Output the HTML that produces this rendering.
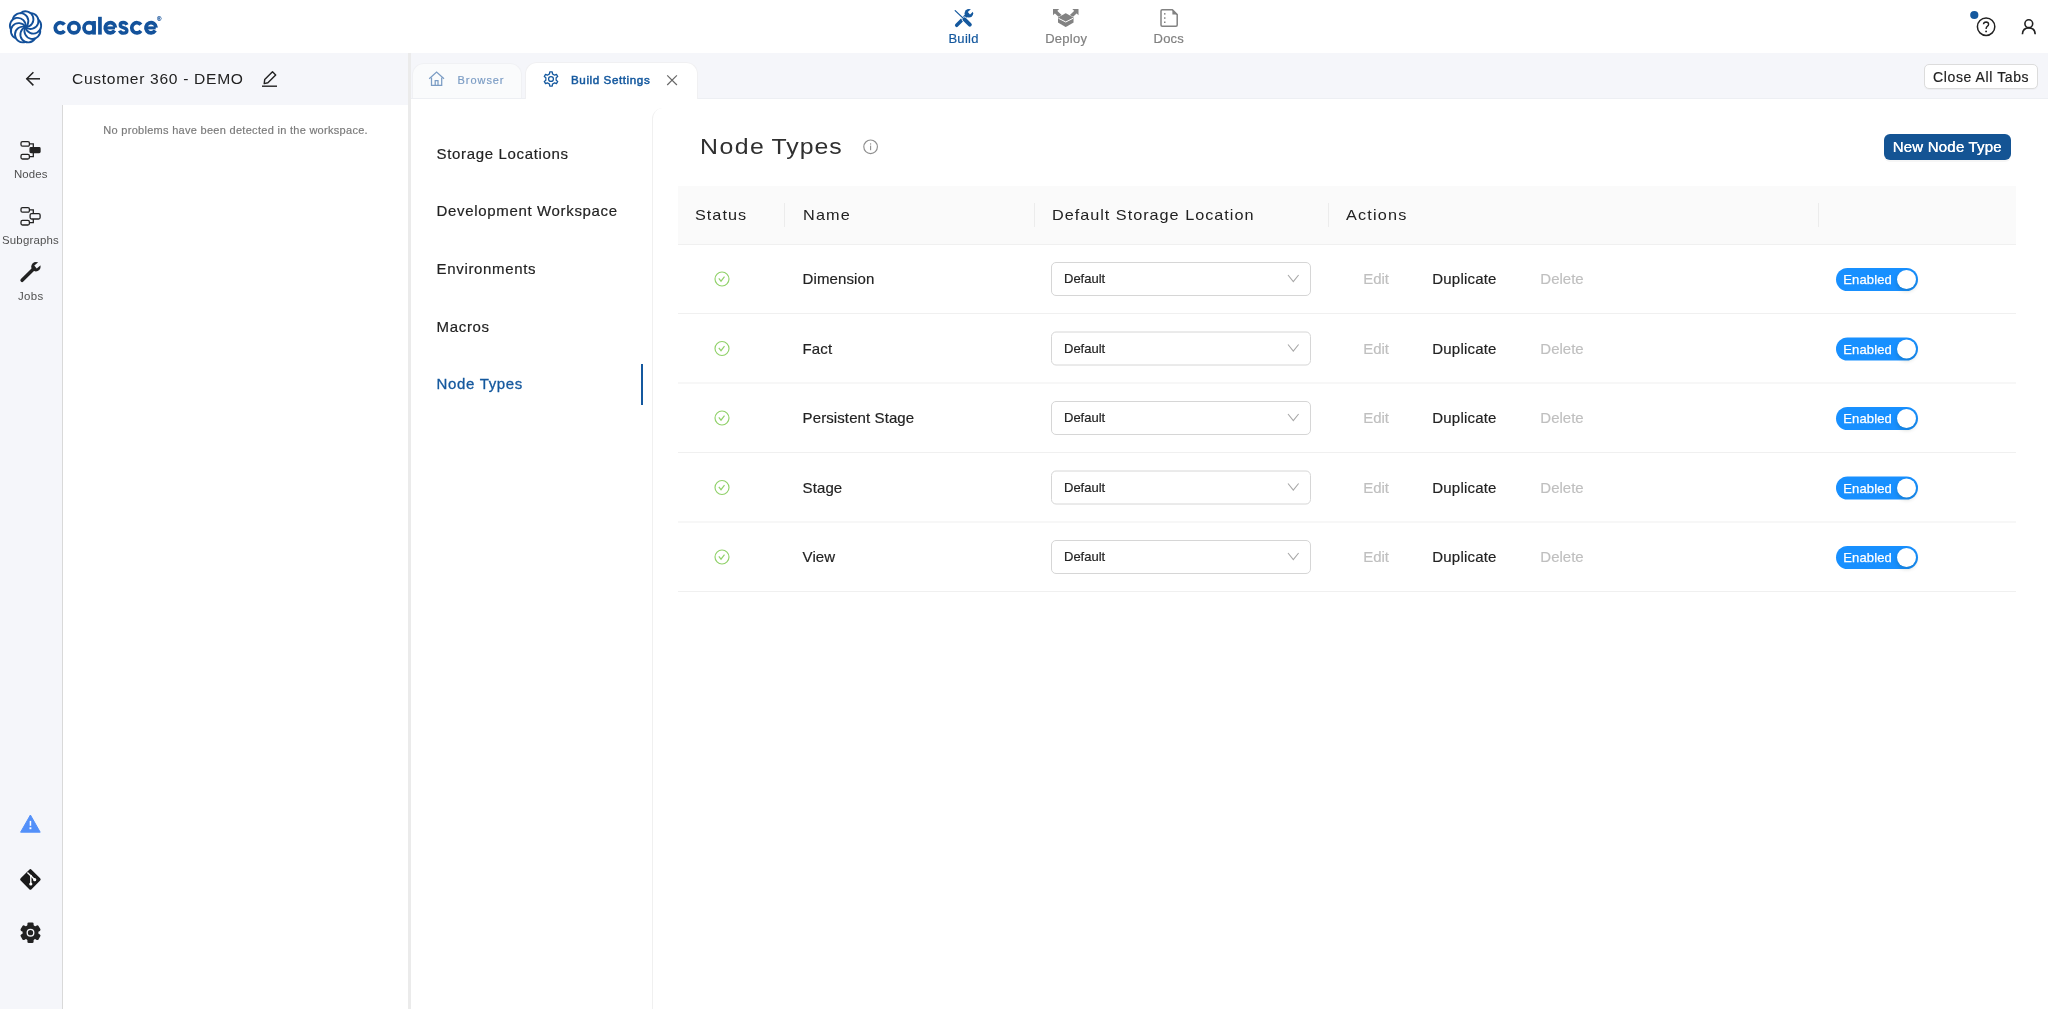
<!DOCTYPE html>
<html>
<head>
<meta charset="utf-8">
<title>Coalesce</title>
<style>
*{box-sizing:border-box;margin:0;padding:0}
html,body{width:2048px;height:1009px;overflow:hidden;background:#fff}
body{font-family:"Liberation Sans",sans-serif;color:#222;position:relative;will-change:transform}
.abs{position:absolute}
.t{position:absolute;white-space:nowrap;line-height:1;-webkit-text-stroke:.18px}
svg{position:absolute;overflow:visible}
#topbar{left:0;top:0;width:2048px;height:53px;background:#fff}
#leftbg{left:0;top:53px;width:408px;height:956px;background:#f5f6fa}
#sideborder{left:62px;top:105px;width:1px;height:904px;background:#d9d9d9}
#leftpanel{left:63px;top:105px;width:345px;height:904px;background:#fff}
#vdiv{left:408px;top:53px;width:3px;height:956px;background:#ebebeb}
#tabstrip{left:411px;top:53px;width:1637px;height:46px;background:#f5f6fa;border-bottom:1px solid #edeff3}
#tab1{left:411.5px;top:62.6px;width:110px;height:35.4px;background:#fafbfc;border-radius:12px 12px 0 0;border:1px solid #f0f1f4;border-bottom:none}
#tab2{left:525.3px;top:62px;width:172.8px;height:37px;background:#fff;border-radius:12px 12px 0 0;border:1px solid #f0f0f2;border-bottom:none}
#rightpanel{left:652px;top:107.5px;width:1410px;height:920px;border-left:1px solid #f0f0f0;border-radius:11px 0 0 0;background:#fff}
#closeall{left:1924.4px;top:64.2px;width:113.3px;height:24.8px;box-shadow:0 1px 1px rgba(0,0,0,.03);background:#fff;border:1px solid #dcdcdc;border-radius:5px}
#newnode{left:1884px;top:134px;width:127px;height:26px;background:#145494;border-radius:6px;box-shadow:0 2px 0 rgba(0,0,0,.035)}
#thead{left:678px;top:186px;width:1338px;height:58.7px;background:#fafafa;border-bottom:1px solid #f0f0f0}
.cdiv{position:absolute;width:1px;height:24px;top:203px;background:#ececec}
.rline{position:absolute;left:678px;width:1338px;height:1px;background:#f0f0f0}
.sel{position:absolute;left:1051px;width:260px;height:34px;border:1px solid #d6d6d6;border-radius:5px;background:#fff}
.sw{position:absolute;left:1836px;width:82px;height:23px;border-radius:12px;background:#1890ff}
.knob{position:absolute;left:1896.9px;width:19.4px;height:19.4px;border-radius:50%;background:#fff;box-shadow:0 2px 4px rgba(0,35,11,.2)}
#actbar{left:641px;top:364px;width:2px;height:41px;background:#14589e}
</style>
</head>
<body>
<div class="abs" id="topbar"></div>
<div class="abs" id="leftbg"></div>
<div class="abs" id="leftpanel"></div>
<div class="abs" id="sideborder"></div>
<div class="abs" id="vdiv"></div>
<div class="abs" id="tabstrip"></div>
<div class="abs" id="tab1"></div>
<div class="abs" id="tab2"></div>
<div class="abs" id="rightpanel"></div>
<div class="abs" id="closeall"></div>
<div class="abs" id="newnode"></div>
<div class="abs" id="thead"></div>
<div class="abs" id="actbar"></div>
<svg style="left:0;top:0" width="60" height="53"><g transform="translate(25.55,27.1)" fill="none" stroke="#13509a" stroke-width="1.85" stroke-linecap="round"><path transform="rotate(0)" d="M0,0 A7.88,7.88 0 1 0 -5.06,-13.91"/><path transform="rotate(40)" d="M0,0 A7.88,7.88 0 1 0 -5.06,-13.91"/><path transform="rotate(80)" d="M0,0 A7.88,7.88 0 1 0 -5.06,-13.91"/><path transform="rotate(120)" d="M0,0 A7.88,7.88 0 1 0 -5.06,-13.91"/><path transform="rotate(160)" d="M0,0 A7.88,7.88 0 1 0 -5.06,-13.91"/><path transform="rotate(200)" d="M0,0 A7.88,7.88 0 1 0 -5.06,-13.91"/><path transform="rotate(240)" d="M0,0 A7.88,7.88 0 1 0 -5.06,-13.91"/><path transform="rotate(280)" d="M0,0 A7.88,7.88 0 1 0 -5.06,-13.91"/><path transform="rotate(320)" d="M0,0 A7.88,7.88 0 1 0 -5.06,-13.91"/></g></svg>
<svg style="left:0;top:0" width="170" height="53"><g fill="none" stroke="#13529b" stroke-width="3.7"><path d="M64.42,30.87 A5.1,5.1 0 1 1 64.42,24.73"/><circle cx="73.95" cy="27.8" r="5.15"/><circle cx="89.1" cy="27.8" r="5.1"/><path d="M94.05,21 V34.6"/><path d="M99.95,16.8 V34.6"/><path d="M114.58,30.58 A5.1,5.1 0 1 1 115.40,27.62"/><path d="M105.6,27.900000000000002 H115" stroke-width="3"/><path d="M126.9,24.9 C126.2,22.9 124.6,22.5 123.3,22.5 C121.4,22.5 120.2,23.5 120.2,24.9 C120.2,26.4 121.4,27.1 123.4,27.7 C125.6,28.3 126.9,29 126.9,30.7 C126.9,32.3 125.4,33.1 123.5,33.1 C121.6,33.1 120.2,32.3 119.6,30.6" stroke-width="3.3"/><path d="M140.92,30.87 A5.1,5.1 0 1 1 140.92,24.73"/><path d="M155.28,30.58 A5.1,5.1 0 1 1 156.10,27.62"/><path d="M146.3,27.900000000000002 H155.7" stroke-width="3"/></g></svg>
<div class="t " style="left:157.00px;top:16.00px;font-size:6px;color:#13509a;">&#174;</div>
<div class="t " style="left:948.40px;top:32.00px;font-size:13px;color:#14589e;letter-spacing:0.3px;-webkit-text-stroke:.2px;">Build</div>
<div class="t " style="left:1045.20px;top:32.00px;font-size:13px;color:#808080;letter-spacing:0.25px;">Deploy</div>
<div class="t " style="left:1153.60px;top:32.00px;font-size:13px;color:#808080;letter-spacing:0.2px;">Docs</div>
<svg style="left:954px;top:8px" width="20" height="20" viewBox="0 0 20 20">
<defs><mask id="wm"><rect x="-2" y="-2" width="24" height="24" fill="#fff"/><rect x="14.9" y="3.55" width="9" height="3.3" transform="rotate(-42 14.9 5.2)" fill="#000"/></mask></defs>
<path d="M2.7,17.3 L12.4,7.6" stroke="#14589e" stroke-width="3.5" stroke-linecap="round" fill="none"/>
<circle cx="14.9" cy="5.2" r="4.3" fill="#14589e" mask="url(#wm)"/>
<g fill="none" stroke="#fff" stroke-linecap="round"><path d="M1.2,2.6 L8.6,10" stroke-width="2.6"/><path d="M10.5,11.4 L15.8,16.6" stroke-width="5.4"/></g>
<g fill="none" stroke="#14589e" stroke-linecap="round"><path d="M1.2,2.6 L9.6,10.6" stroke-width="1.3"/><path d="M10.5,11.4 L15.8,16.6" stroke-width="4"/></g>
</svg>
<svg style="left:1052px;top:8px" width="28" height="20" viewBox="0 0 28 20">
<g fill="none" stroke="#828282" stroke-width="3.5"><path d="M3.4,3.4 L10.8,10.6"/><path d="M24.1,3.4 L16.7,10.6"/></g>
<g fill="#828282" stroke="none"><polygon points="1,1.1 7.2,1.1 1,7.2"/><polygon points="26.5,1.1 20.3,1.1 26.5,7.2"/></g>
<polygon points="6,9.5 13.75,5.3 21.5,9.5 21.5,14.5 13.75,18.9 6,14.5" fill="#828282" stroke="#fff" stroke-width="0.9"/>
<polygon points="6,9.5 13.75,5.3 21.5,9.5 21.5,14.5 13.75,18.9 6,14.5" fill="#828282"/>
<path d="M6.5,10.3 L13.75,14 L21,10.3" fill="none" stroke="#fff" stroke-width="1"/>
</svg>
<svg style="left:1160px;top:9px" width="18" height="18" viewBox="0 0 18 18">
<path d="M2.2,0.8 H12.4 L17.2,5.6 V16 Q17.2,17.2 16,17.2 H2.2 Q1,17.2 1,16 V2 Q1,0.8 2.2,0.8 Z" fill="none" stroke="#828282" stroke-width="1.5" stroke-linejoin="round"/>
<polygon points="12.4,0.8 12.4,5.6 17.2,5.6" fill="#828282"/>
<g fill="#828282"><rect x="4" y="4.1" width="1.5" height="1.5"/><rect x="4" y="8.3" width="1.5" height="1.5"/><rect x="4" y="12.5" width="1.5" height="1.5"/></g>
</svg>
<svg style="left:1960px;top:0" width="88" height="53" viewBox="0 0 88 53">
<circle cx="14.3" cy="15.0" r="4.1" fill="#14589e"/>
<circle cx="26.1" cy="26.7" r="8.7" fill="none" stroke="#222" stroke-width="1.5"/>
<path d="M23.5,24.3 Q23.6,22 26.1,22 Q28.6,22.1 28.6,24.2 Q28.6,25.5 27.3,26.4 Q26.1,27.2 26.1,28.9" fill="none" stroke="#222" stroke-width="1.4"/>
<circle cx="26.1" cy="31.4" r="0.95" fill="#222"/>
<circle cx="68.8" cy="23.7" r="3.9" fill="none" stroke="#222" stroke-width="1.6"/>
<path d="M62.4,34.2 Q62.8,27.9 68.8,27.9 Q74.8,27.9 75.2,34.2" fill="none" stroke="#222" stroke-width="1.6"/>
</svg>
<svg style="left:20px;top:66px" width="270" height="28" viewBox="0 0 270 28">
<g fill="none" stroke="#222" stroke-width="1.5"><path d="M6.6,12.8 H20"/><path d="M13.4,6.2 L6.8,12.8 L13.4,19.4"/></g>
<g fill="none" stroke="#222" stroke-width="1.4"><path d="M242,20.2 H257"/><path d="M244.2,17.6 L244.7,13.6 L252.5,5.8 L255.7,8.9 L247.9,16.7 Z" stroke-linejoin="round"/></g>
</svg>
<div class="t " style="left:72.00px;top:71.90px;font-size:14.2px;color:#222;letter-spacing:0.62px;transform:scaleX(1.1);transform-origin:0 0;-webkit-text-stroke:0;">Customer 360 - DEMO</div>
<div class="t " style="left:103.30px;top:124.50px;font-size:11px;color:#7a7a7a;letter-spacing:0.29px;">No problems have been detected in the workspace.</div>
<svg style="left:0;top:139.7px" width="62" height="20" viewBox="0 0 62 20">
<g fill="none" stroke="#222" stroke-width="1.3">
<rect x="21" y="1.6" width="8.4" height="4.6" rx="1.5"/>
<rect x="21" y="14.4" width="8.4" height="4.6" rx="1.5"/>
<path d="M29.4,3.9 H33.3 V7.6"/><path d="M29.4,16.7 H33.3 V13"/>
<rect x="30.1" y="7.7" width="9.9" height="4.9" rx="0.8" fill="#222"/>
</g></svg>
<svg style="left:0;top:206.0px" width="62" height="20" viewBox="0 0 62 20">
<g fill="none" stroke="#222" stroke-width="1.3">
<rect x="21" y="1.6" width="8.4" height="4.6" rx="1.5"/>
<rect x="21" y="14.4" width="8.4" height="4.6" rx="1.5"/>
<path d="M29.4,3.9 H33.3 V7.6"/><path d="M29.4,16.7 H33.3 V13"/>
<rect x="30.1" y="7.6" width="10" height="5.4" rx="1.5" fill="none"/>
</g></svg>
<div class="t " style="left:13.90px;top:168.70px;font-size:10.6px;color:#505050;letter-spacing:0.1px;transform:scaleX(1.08);transform-origin:0 0;-webkit-text-stroke:0;">Nodes</div>
<div class="t " style="left:1.80px;top:234.70px;font-size:10.6px;color:#505050;letter-spacing:0.16px;transform:scaleX(1.08);transform-origin:0 0;-webkit-text-stroke:0;">Subgraphs</div>
<div class="t " style="left:18.30px;top:290.70px;font-size:10.6px;color:#505050;letter-spacing:0.3px;transform:scaleX(1.08);transform-origin:0 0;-webkit-text-stroke:0;">Jobs</div>
<svg style="left:19px;top:261px" width="24" height="22" viewBox="0 0 24 22">
<defs><mask id="wj"><rect x="-2" y="-2" width="28" height="26" fill="#fff"/><rect x="16.4" y="3.8" width="9" height="3.8" transform="rotate(-40 16.9 5.7)" fill="#000"/></mask></defs>
<path d="M3.1,19.3 L14,8.6" stroke="#222" stroke-width="3.5" stroke-linecap="round" fill="none"/>
<circle cx="16.9" cy="5.7" r="4.7" fill="#222" mask="url(#wj)"/>
</svg>
<svg style="left:19px;top:813px" width="24" height="22" viewBox="0 0 24 22">
<path d="M11.4,2 L21.2,19.2 H1.6 Z" fill="#5390f9" stroke="#5390f9" stroke-width="1" stroke-linejoin="round"/>
<rect x="10.7" y="7.9" width="1.5" height="4.9" fill="#fff"/><rect x="10.5" y="14.3" width="1.9" height="1.9" fill="#fff"/>
</svg>
<svg style="left:19px;top:867px" width="24" height="24" viewBox="0 0 24 24">
<rect x="3.7" y="4.7" width="15.4" height="15.4" rx="1.6" transform="rotate(45 11.4 12.4)" fill="#1a1a1a"/>
<g stroke="#fff" stroke-width="1.35" fill="none"><path d="M8.4,5.4 L11.8,8.8 V17"/><path d="M11.8,8.8 L15.6,12.6"/></g>
<g fill="#fff"><circle cx="11.8" cy="8.8" r="1.0"/><circle cx="11.8" cy="17" r="1.6"/><circle cx="15.7" cy="12.7" r="1.6"/></g>
</svg>
<svg style="left:19px;top:921px" width="24" height="24" viewBox="0 0 24 24">
<g transform="translate(11.5,11.7)" fill="#222"><rect x="-3.1" y="-10.3" width="6.2" height="5" rx="1.3" transform="rotate(0)"/><rect x="-3.1" y="-10.3" width="6.2" height="5" rx="1.3" transform="rotate(60)"/><rect x="-3.1" y="-10.3" width="6.2" height="5" rx="1.3" transform="rotate(120)"/><rect x="-3.1" y="-10.3" width="6.2" height="5" rx="1.3" transform="rotate(180)"/><rect x="-3.1" y="-10.3" width="6.2" height="5" rx="1.3" transform="rotate(240)"/><rect x="-3.1" y="-10.3" width="6.2" height="5" rx="1.3" transform="rotate(300)"/><circle r="7.9"/></g>
<circle cx="11.5" cy="11.7" r="3.3" fill="none" stroke="#f5f6fa" stroke-width="1.3"/>
</svg>
<svg style="left:428px;top:70px" width="18" height="18" viewBox="0 0 18 18">
<g fill="none" stroke="#7b9cc4" stroke-width="1.25" stroke-linejoin="miter"><path d="M1.2,8.8 L8.6,2.1 L16,8.8"/><path d="M3.5,7.4 V15.4 H13.7 V7.4"/><path d="M7.2,15.4 V10.6 H10 V15.4"/></g>
</svg>
<div class="t " style="left:457.60px;top:74.50px;font-size:11px;color:#7b9cc4;letter-spacing:0.93px;">Browser</div>
<svg style="left:542.6px;top:70.5px" width="16" height="16" viewBox="0 0 16 16">
<g transform="rotate(30 8 8)"><path d="M15.04,6.73 L15.04,9.27 L13.09,9.48 L11.83,11.67 L12.62,13.46 L10.42,14.73 L9.26,13.15 L6.74,13.15 L5.58,14.73 L3.38,13.46 L4.17,11.67 L2.91,9.48 L0.96,9.27 L0.96,6.73 L2.91,6.52 L4.17,4.33 L3.38,2.54 L5.58,1.27 L6.74,2.85 L9.26,2.85 L10.42,1.27 L12.62,2.54 L11.83,4.33 L13.09,6.52 Z" fill="none" stroke="#14589e" stroke-width="1.25" stroke-linejoin="round"/></g>
<circle cx="8" cy="8" r="2.45" fill="none" stroke="#14589e" stroke-width="1.25"/>
</svg>
<div class="t " style="left:571.00px;top:74.20px;font-size:11.6px;color:#14589e;letter-spacing:0.6px;-webkit-text-stroke:.5px;">Build Settings</div>
<svg style="left:667px;top:75px" width="11" height="11" viewBox="0 0 11 11"><g stroke="#666" stroke-width="1.15" fill="none"><path d="M0.2,0.3 L9.9,10"/><path d="M9.9,0.3 L0.2,10"/></g></svg>
<div class="t " style="left:1933.10px;top:70.00px;font-size:14px;color:#222;letter-spacing:0.6px;">Close All Tabs</div>
<div class="t " style="left:436.60px;top:146.00px;font-size:15px;color:#222;letter-spacing:0.66px;">Storage Locations</div>
<div class="t " style="left:436.60px;top:203.00px;font-size:15px;color:#222;letter-spacing:0.66px;">Development Workspace</div>
<div class="t " style="left:436.60px;top:261.00px;font-size:15px;color:#222;letter-spacing:0.66px;">Environments</div>
<div class="t " style="left:436.60px;top:319.00px;font-size:15px;color:#222;letter-spacing:0.66px;">Macros</div>
<div class="t " style="left:436.60px;top:376.00px;font-size:15px;color:#14589e;letter-spacing:0.66px;-webkit-text-stroke:.3px;">Node Types</div>
<div class="t " style="left:699.80px;top:136.30px;font-size:22.4px;color:#303030;transform:scaleX(1.11);transform-origin:0 0;-webkit-text-stroke:0;"><span style="letter-spacing:1.3px">Node </span><span style="letter-spacing:0.85px;margin-left:-1.8px">Types</span></div>
<svg style="left:862px;top:138px" width="18" height="18" viewBox="0 0 18 18"><circle cx="8.6" cy="8.8" r="6.8" fill="none" stroke="#8e8e8e" stroke-width="1.15"/><rect x="8.05" y="7.6" width="1.1" height="4.6" fill="#8e8e8e"/><rect x="8.05" y="5.3" width="1.1" height="1.3" fill="#8e8e8e"/></svg>
<div class="t " style="left:1892.80px;top:139.00px;font-size:15px;color:#fff;letter-spacing:0.2px;text-shadow:0 0 .4px #fff;">New Node Type</div>
<div class="cdiv" style="left:784px"></div>
<div class="cdiv" style="left:1033.5px"></div>
<div class="cdiv" style="left:1327.5px"></div>
<div class="cdiv" style="left:1818px"></div>
<div class="t " style="left:695.00px;top:207.75px;font-size:14.5px;color:#222;letter-spacing:0.9px;transform:scaleX(1.12);transform-origin:0 0;-webkit-text-stroke:0;">Status</div>
<div class="t " style="left:803.00px;top:207.75px;font-size:14.5px;color:#222;letter-spacing:1.05px;transform:scaleX(1.12);transform-origin:0 0;-webkit-text-stroke:0;">Name</div>
<div class="t " style="left:1051.60px;top:207.75px;font-size:14.5px;color:#222;letter-spacing:0.88px;transform:scaleX(1.12);transform-origin:0 0;-webkit-text-stroke:0;">Default Storage Location</div>
<div class="t " style="left:1345.80px;top:207.75px;font-size:14.5px;color:#222;letter-spacing:1.05px;transform:scaleX(1.12);transform-origin:0 0;-webkit-text-stroke:0;">Actions</div>
<div class="abs" style="left:0;top:0;width:0;height:0;transform:translateY(0.0px)">
<div class="rline" style="top:313px"></div>
<svg style="left:713.4px;top:269.5px" width="18" height="18" viewBox="0 0 18 18"><circle cx="9" cy="9" r="7" fill="none" stroke="#90d169" stroke-width="1.15"/><path d="M5.8,8.4 L8,11.2 L11.5,6.6" fill="none" stroke="#90d169" stroke-width="1.15"/></svg>
<div class="t " style="left:802.60px;top:271.00px;font-size:15px;color:#222;letter-spacing:0.1px;">Dimension</div>
<div class="sel" style="top:262.1px"></div>
<div class="t " style="left:1064.00px;top:272.00px;font-size:13px;color:#222;">Default</div>
<svg style="left:1287px;top:274.3px" width="13" height="9" viewBox="0 0 13 9"><path d="M1,1 L6.3,7.6 L11.6,1" fill="none" stroke="#a8a8a8" stroke-width="1.1"/></svg>
<div class="t " style="left:1363.20px;top:271.00px;font-size:15px;color:#bfbfbf;">Edit</div>
<div class="t " style="left:1432.30px;top:271.00px;font-size:15px;color:#222;letter-spacing:0.2px;">Duplicate</div>
<div class="t " style="left:1540.30px;top:271.00px;font-size:15px;color:#bfbfbf;">Delete</div>
<div class="sw" style="top:267.7px"></div><div class="knob" style="top:269.5px"></div>
<div class="t " style="left:1843.30px;top:273.00px;font-size:13px;color:#fff;letter-spacing:0.12px;-webkit-text-stroke:.25px #fff;">Enabled</div>
</div>
<div class="abs" style="left:0;top:0;width:0;height:0;transform:translateY(0.5px)">
<div class="rline" style="top:382px"></div>
<svg style="left:713.4px;top:338.5px" width="18" height="18" viewBox="0 0 18 18"><circle cx="9" cy="9" r="7" fill="none" stroke="#90d169" stroke-width="1.15"/><path d="M5.8,8.4 L8,11.2 L11.5,6.6" fill="none" stroke="#90d169" stroke-width="1.15"/></svg>
<div class="t " style="left:802.60px;top:340.00px;font-size:15px;color:#222;letter-spacing:0.1px;">Fact</div>
<div class="sel" style="top:331.1px"></div>
<div class="t " style="left:1064.00px;top:341.00px;font-size:13px;color:#222;">Default</div>
<svg style="left:1287px;top:343.3px" width="13" height="9" viewBox="0 0 13 9"><path d="M1,1 L6.3,7.6 L11.6,1" fill="none" stroke="#a8a8a8" stroke-width="1.1"/></svg>
<div class="t " style="left:1363.20px;top:340.00px;font-size:15px;color:#bfbfbf;">Edit</div>
<div class="t " style="left:1432.30px;top:340.00px;font-size:15px;color:#222;letter-spacing:0.2px;">Duplicate</div>
<div class="t " style="left:1540.30px;top:340.00px;font-size:15px;color:#bfbfbf;">Delete</div>
<div class="sw" style="top:336.7px"></div><div class="knob" style="top:338.5px"></div>
<div class="t " style="left:1843.30px;top:342.00px;font-size:13px;color:#fff;letter-spacing:0.12px;-webkit-text-stroke:.25px #fff;">Enabled</div>
</div>
<div class="abs" style="left:0;top:0;width:0;height:0;transform:translateY(0.0px)">
<div class="rline" style="top:452px"></div>
<svg style="left:713.4px;top:408.5px" width="18" height="18" viewBox="0 0 18 18"><circle cx="9" cy="9" r="7" fill="none" stroke="#90d169" stroke-width="1.15"/><path d="M5.8,8.4 L8,11.2 L11.5,6.6" fill="none" stroke="#90d169" stroke-width="1.15"/></svg>
<div class="t " style="left:802.60px;top:410.00px;font-size:15px;color:#222;letter-spacing:0.1px;">Persistent Stage</div>
<div class="sel" style="top:401.1px"></div>
<div class="t " style="left:1064.00px;top:411.00px;font-size:13px;color:#222;">Default</div>
<svg style="left:1287px;top:413.3px" width="13" height="9" viewBox="0 0 13 9"><path d="M1,1 L6.3,7.6 L11.6,1" fill="none" stroke="#a8a8a8" stroke-width="1.1"/></svg>
<div class="t " style="left:1363.20px;top:410.00px;font-size:15px;color:#bfbfbf;">Edit</div>
<div class="t " style="left:1432.30px;top:410.00px;font-size:15px;color:#222;letter-spacing:0.2px;">Duplicate</div>
<div class="t " style="left:1540.30px;top:410.00px;font-size:15px;color:#bfbfbf;">Delete</div>
<div class="sw" style="top:406.7px"></div><div class="knob" style="top:408.5px"></div>
<div class="t " style="left:1843.30px;top:412.00px;font-size:13px;color:#fff;letter-spacing:0.12px;-webkit-text-stroke:.25px #fff;">Enabled</div>
</div>
<div class="abs" style="left:0;top:0;width:0;height:0;transform:translateY(0.5px)">
<div class="rline" style="top:521px"></div>
<svg style="left:713.4px;top:477.5px" width="18" height="18" viewBox="0 0 18 18"><circle cx="9" cy="9" r="7" fill="none" stroke="#90d169" stroke-width="1.15"/><path d="M5.8,8.4 L8,11.2 L11.5,6.6" fill="none" stroke="#90d169" stroke-width="1.15"/></svg>
<div class="t " style="left:802.60px;top:479.00px;font-size:15px;color:#222;letter-spacing:0.1px;">Stage</div>
<div class="sel" style="top:470.1px"></div>
<div class="t " style="left:1064.00px;top:480.00px;font-size:13px;color:#222;">Default</div>
<svg style="left:1287px;top:482.3px" width="13" height="9" viewBox="0 0 13 9"><path d="M1,1 L6.3,7.6 L11.6,1" fill="none" stroke="#a8a8a8" stroke-width="1.1"/></svg>
<div class="t " style="left:1363.20px;top:479.00px;font-size:15px;color:#bfbfbf;">Edit</div>
<div class="t " style="left:1432.30px;top:479.00px;font-size:15px;color:#222;letter-spacing:0.2px;">Duplicate</div>
<div class="t " style="left:1540.30px;top:479.00px;font-size:15px;color:#bfbfbf;">Delete</div>
<div class="sw" style="top:475.7px"></div><div class="knob" style="top:477.5px"></div>
<div class="t " style="left:1843.30px;top:481.00px;font-size:13px;color:#fff;letter-spacing:0.12px;-webkit-text-stroke:.25px #fff;">Enabled</div>
</div>
<div class="abs" style="left:0;top:0;width:0;height:0;transform:translateY(0.0px)">
<div class="rline" style="top:591px"></div>
<svg style="left:713.4px;top:547.5px" width="18" height="18" viewBox="0 0 18 18"><circle cx="9" cy="9" r="7" fill="none" stroke="#90d169" stroke-width="1.15"/><path d="M5.8,8.4 L8,11.2 L11.5,6.6" fill="none" stroke="#90d169" stroke-width="1.15"/></svg>
<div class="t " style="left:802.60px;top:549.00px;font-size:15px;color:#222;letter-spacing:0.1px;">View</div>
<div class="sel" style="top:540.1px"></div>
<div class="t " style="left:1064.00px;top:550.00px;font-size:13px;color:#222;">Default</div>
<svg style="left:1287px;top:552.3px" width="13" height="9" viewBox="0 0 13 9"><path d="M1,1 L6.3,7.6 L11.6,1" fill="none" stroke="#a8a8a8" stroke-width="1.1"/></svg>
<div class="t " style="left:1363.20px;top:549.00px;font-size:15px;color:#bfbfbf;">Edit</div>
<div class="t " style="left:1432.30px;top:549.00px;font-size:15px;color:#222;letter-spacing:0.2px;">Duplicate</div>
<div class="t " style="left:1540.30px;top:549.00px;font-size:15px;color:#bfbfbf;">Delete</div>
<div class="sw" style="top:545.7px"></div><div class="knob" style="top:547.5px"></div>
<div class="t " style="left:1843.30px;top:551.00px;font-size:13px;color:#fff;letter-spacing:0.12px;-webkit-text-stroke:.25px #fff;">Enabled</div>
</div>
</body>
</html>
